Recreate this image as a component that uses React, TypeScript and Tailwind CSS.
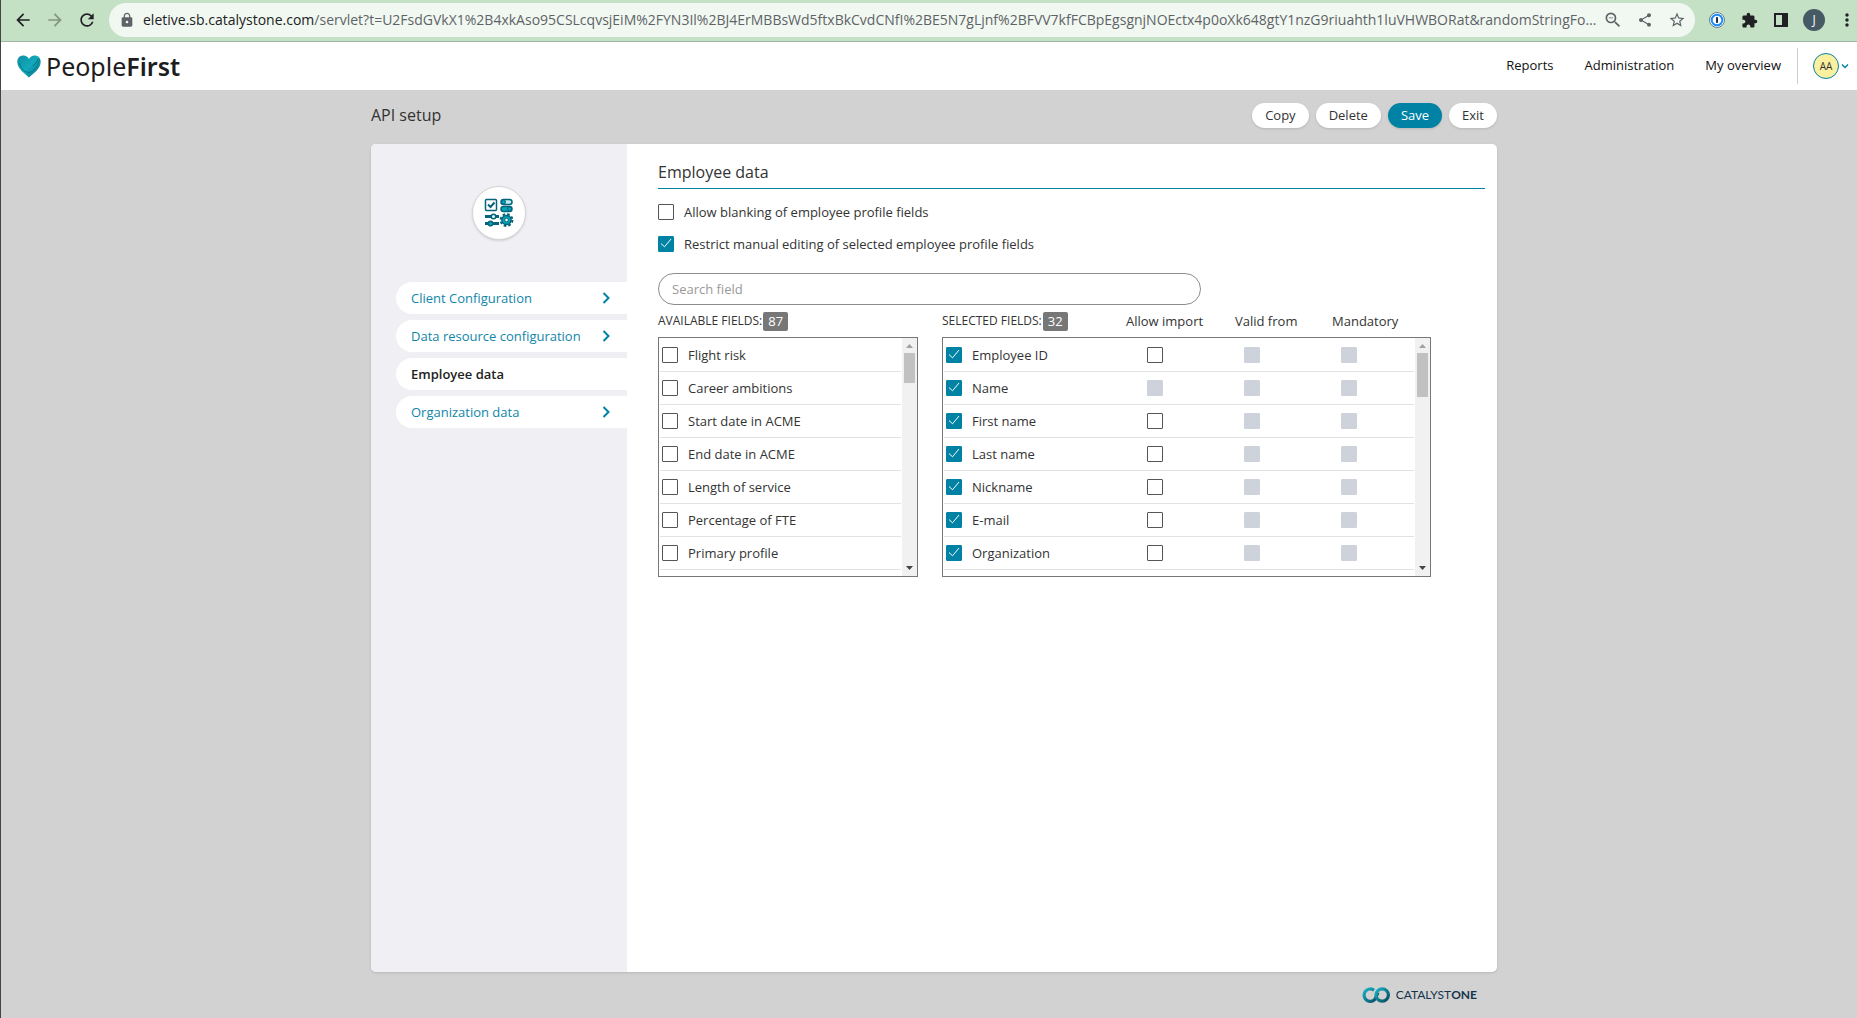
import { useState } from 'react';
import type { ReactNode } from 'react';
import {
  MdArrowBack,
  MdArrowForward,
  MdExtension,
  MdLock,
  MdMoreVert,
  MdOutlineZoomOut,
  MdRefresh,
  MdShare,
  MdStarBorder,
} from 'react-icons/md';

const HOST = 'eletive.sb.catalystone.com';
const PATH =
  '/servlet?t=U2FsdGVkX1%2B4xkAso95CSLcqvsjEiM%2FYN3Il%2BJ4ErMBBsWd5ftxBkCvdCNfI%2BE5N7gLjnf%2BFVV7kfFCBpEgsgnjNOEctx4p0oXk648gtY1nzG9riuahth1luVHWBORat&randomStringFo…';

const MENU = ['Client Configuration', 'Data resource configuration', 'Employee data', 'Organization data'];

const AVAILABLE = [
  'Flight risk',
  'Career ambitions',
  'Start date in ACME',
  'End date in ACME',
  'Length of service',
  'Percentage of FTE',
  'Primary profile',
];

const SELECTED = [
  { name: 'Employee ID', importable: true },
  { name: 'Name', importable: false },
  { name: 'First name', importable: true },
  { name: 'Last name', importable: true },
  { name: 'Nickname', importable: true },
  { name: 'E-mail', importable: true },
  { name: 'Organization', importable: true },
];

type CheckboxProps = {
  label?: string;
  defaultChecked?: boolean;
  disabled?: boolean;
};

function Checkbox({ label, defaultChecked = false, disabled = false }: CheckboxProps) {
  const [checked, setChecked] = useState(defaultChecked);

  return (
    <span className="grid size-4 shrink-0">
      <input
        type="checkbox"
        aria-label={label}
        checked={checked}
        disabled={disabled}
        onChange={(e) => setChecked(e.target.checked)}
        className="col-start-1 row-start-1 size-4 appearance-none rounded-[1px] border border-[#555] bg-white checked:border-[#0082a5] checked:bg-[#0082a5] disabled:border-[#ced3db] disabled:bg-[#ced3db]"
      />
      {checked && (
        <svg
          className="pointer-events-none col-start-1 row-start-1 size-4"
          viewBox="0 0 16 16"
          fill="none"
          stroke="white"
        >
          <path d="M3 7.5l3.5 3.3L13 3" />
        </svg>
      )}
    </span>
  );
}

function BrowserBar() {
  return (
    <div className="flex h-[42px] items-center border-b border-[#9fb5a3] bg-[#c5e1c5] pb-px text-[#202124]">
      <div className="flex w-[108px] shrink-0 items-center gap-3 pl-3">
        <button aria-label="Back">
          <MdArrowBack className="size-5" />
        </button>
        <button aria-label="Forward" className="text-[#82957f]">
          <MdArrowForward className="size-5" />
        </button>
        <button aria-label="Reload">
          <MdRefresh className="size-5" />
        </button>
      </div>
      <div className="flex h-[34px] min-w-0 flex-1 items-center rounded-full bg-[#f1f8f1] pr-2 pl-2.5 text-[#5f6368]">
        <MdLock className="size-4 shrink-0" />
        <div className="ml-2 min-w-0 flex-1 overflow-hidden text-[14px] whitespace-nowrap">
          <span className="text-[#202124]">{HOST}</span>
          {PATH}
        </div>
        <div className="flex shrink-0 items-center gap-3">
          <button aria-label="Zoom" className="grid w-5 place-items-center">
            <MdOutlineZoomOut className="size-5" />
          </button>
          <button aria-label="Share" className="grid w-5 place-items-center">
            <MdShare className="size-4" />
          </button>
          <button aria-label="Bookmark" className="grid w-5 place-items-center">
            <MdStarBorder className="size-[18px]" />
          </button>
        </div>
      </div>
      <div className="flex shrink-0 items-center gap-3 pl-3">
        <button aria-label="Password manager" className="grid w-5 place-items-center">
          <svg className="size-4" viewBox="0 0 16 16">
            <circle cx="8" cy="8" r="7.5" fill="#fff" stroke="#6b7b86" />
            <circle cx="8" cy="8" r="5.3" fill="#fff" stroke="#1a8cff" strokeWidth="2" />
            <rect x="7" y="5" width="2" height="6" rx=".8" fill="#1b2b4b" />
          </svg>
        </button>
        <button aria-label="Extensions" className="grid w-5 place-items-center">
          <MdExtension className="size-[17px]" />
        </button>
        <button aria-label="Side panel" className="grid w-5 place-items-center">
          <svg className="size-4" viewBox="0 0 16 16">
            <path fillRule="evenodd" d="M1 1h14v14H1zM3 3v10h6V3z" fill="currentColor" />
          </svg>
        </button>
        <button className="size-[22px] rounded-full bg-[#455a64] text-[12px] text-white">J</button>
        <button aria-label="Menu" className="grid w-5 place-items-center">
          <MdMoreVert className="size-5" />
        </button>
      </div>
    </div>
  );
}

function HeartLogo() {
  return (
    <svg className="h-[23px] w-6" viewBox="0 0 24 23">
      <defs>
        <linearGradient id="heart" x1="0" y1="0" x2="1" y2="1">
          <stop offset="0" stopColor="#0b8fa0" />
          <stop offset=".5" stopColor="#12a9bb" />
          <stop offset="1" stopColor="#046d80" />
        </linearGradient>
      </defs>
      <path
        d="M12 22.5C9 19.5 0 14 .3 6.5 .5 2.5 3.3.5 6.3.5c2.5 0 4.7 1.4 5.7 3.5 1-2.1 3.2-3.5 5.7-3.5 3 0 5.8 2 6 6C24 14 15 19.5 12 22.5z"
        fill="url(#heart)"
      />
      <path d="M2.5 8c1 6 5 9 9.5 9.5C17.5 17 21 11 22.5 4" fill="none" stroke="#067a8c" />
      <path d="M16 11c2-2 4-4 5-7" fill="none" stroke="#056c7d" />
    </svg>
  );
}

function Header() {
  return (
    <header className="flex h-12 items-center bg-white pr-2 pl-4">
      <a href="#" className="flex items-center gap-[5px] font-['Noto_Sans',sans-serif] text-[25px] text-[#1d1d1d]">
        <HeartLogo />
        <span>
          People<b className="font-semibold">First</b>
        </span>
      </a>
      <nav className="ml-auto flex items-center gap-[31px] pb-0.5 text-[#111]">
        <a href="#">Reports</a>
        <a href="#">Administration</a>
        <a href="#">My overview</a>
      </nav>
      <button className="ml-4 flex h-9 items-center gap-0.5 border-l border-[#ccc] pl-[15px]">
        <span className="grid size-[26px] place-items-center rounded-full border border-[#0082a5] bg-[#faf0a0] text-[10px]">
          AA
        </span>
        <svg className="size-2" viewBox="0 0 8 8" fill="none" stroke="#0082a5" strokeWidth="1.5">
          <path d="M1 2.5l3 3 3-3" />
        </svg>
      </button>
    </header>
  );
}

function SetupIcon() {
  return (
    <svg className="size-[30px]" viewBox="0 0 30 30" fill="none" stroke="#05647a" strokeWidth="1.5">
      <rect x="1.5" y="1.5" width="11" height="11" rx="1" />
      <path d="M4 6.5L6.5 9l4-4.5" strokeWidth="2" />
      <rect x="17" y="1.5" width="11" height="5" rx="2.5" fill="#bdeef3" />
      <circle cx="19.5" cy="4" r="2" fill="#00a5b8" strokeWidth="1" />
      <rect x="17" y="8.5" width="11" height="5" rx="2.5" fill="#00a5b8" />
      <circle cx="25.5" cy="11" r="2" fill="#00a5b8" strokeWidth="1" />
      <path d="M1 18.5h14M1 25.5h14" strokeWidth="3" />
      <circle cx="9.5" cy="18.5" r="2.3" fill="#d9f5f8" />
      <circle cx="6.5" cy="25.5" r="2.3" fill="#00a5b8" />
      <circle cx="22.5" cy="22" r="5.9" strokeWidth="2" strokeDasharray="2.6 2.03" />
      <circle cx="22.5" cy="22" r="4.6" fill="#00a5b8" />
      <circle cx="22.5" cy="22" r="1.8" fill="#fff" strokeWidth="1" />
    </svg>
  );
}

function Sidebar() {
  return (
    <aside className="w-64 shrink-0 bg-[#efeff4] pt-[42px] pl-[25px]">
      <div className="mr-[25px] flex justify-center">
        <div className="grid size-[54px] place-items-center rounded-full border border-[#d5d5d5] bg-white shadow-sm">
          <SetupIcon />
        </div>
      </div>
      <nav className="mt-[42px] flex flex-col gap-1.5">
        {MENU.map((item) =>
          item === 'Employee data' ? (
            <a
              key={item}
              href="#"
              aria-current="page"
              className="flex h-8 items-center rounded-l-full bg-white pl-[15px] font-semibold text-[#222]"
            >
              {item}
            </a>
          ) : (
            <a
              key={item}
              href="#"
              className="flex h-8 items-center justify-between rounded-l-full bg-white pr-[17px] pl-[15px] text-[#0f86a8]"
            >
              {item}
              <svg className="h-3 w-2" viewBox="0 0 8 12" fill="none" stroke="#0082a5" strokeWidth="2">
                <path d="M1.5 1l5 5-5 5" />
              </svg>
            </a>
          ),
        )}
      </nav>
    </aside>
  );
}

function Count({ children }: { children: ReactNode }) {
  return <span className="rounded-[2px] bg-[#777] px-[5px] leading-[19px] text-white">{children}</span>;
}

function Scrollbar({ thumb }: { thumb: string }) {
  return (
    <div className="flex w-[15px] shrink-0 flex-col items-center bg-[#f1f1f1]">
      <svg className="size-[15px]" viewBox="0 0 15 15">
        <path d="M4 10l3.5-4 3.5 4z" fill="#a0a0a0" />
      </svg>
      <div className={`w-[11px] bg-[#c1c1c1] ${thumb}`} />
      <svg className="mt-auto size-[15px]" viewBox="0 0 15 15">
        <path d="M4 5l3.5 4L11 5z" fill="#444" />
      </svg>
    </div>
  );
}

function AvailableFields() {
  return (
    <section className="w-[260px]">
      <h2 className="flex h-8 items-center gap-px">
        <span className="text-[12px]">AVAILABLE FIELDS:</span>
        <Count>87</Count>
      </h2>
      <div className="flex h-60 border border-[#777] bg-white">
        <ul className="mx-px min-w-0 flex-1 pt-px">
          {AVAILABLE.map((name) => (
            <li key={name} className="border-b border-[#e2e2e2]">
              <label className="flex h-8 items-center gap-2.5 pl-0.5">
                <Checkbox />
                {name}
              </label>
            </li>
          ))}
        </ul>
        <Scrollbar thumb="h-[30px]" />
      </div>
    </section>
  );
}

function SelectedFields() {
  return (
    <section className="w-[489px]">
      <div className="flex h-8 items-center">
        <h2 className="flex w-[184px] items-center gap-px">
          <span className="text-[12px]">SELECTED FIELDS:</span>
          <Count>32</Count>
        </h2>
        <span className="w-[109px]">Allow import</span>
        <span className="w-[97px]">Valid from</span>
        <span>Mandatory</span>
      </div>
      <div className="flex h-60 border border-[#777] bg-white">
        <div className="mx-px min-w-0 flex-1 pt-px">
          <table className="w-full table-fixed border-separate border-spacing-0 [&_td]:h-[33px] [&_td]:border-b [&_td]:border-[#e2e2e2]">
            <colgroup>
              <col className="w-[203px]" />
              <col className="w-[97px]" />
              <col className="w-[97px]" />
              <col />
            </colgroup>
            <tbody>
              {SELECTED.map(({ name, importable }) => (
                <tr key={name}>
                  <td className="pl-0.5">
                    <label className="flex items-center gap-2.5">
                      <Checkbox defaultChecked />
                      {name}
                    </label>
                  </td>
                  <td>
                    <Checkbox label={`${name}: allow import`} disabled={!importable} />
                  </td>
                  <td>
                    <Checkbox label={`${name}: valid from`} disabled />
                  </td>
                  <td>
                    <Checkbox label={`${name}: mandatory`} disabled />
                  </td>
                </tr>
              ))}
            </tbody>
          </table>
        </div>
        <Scrollbar thumb="h-11" />
      </div>
    </section>
  );
}

function Footer() {
  return (
    <footer className="flex items-center justify-end gap-1.5 pt-[13px] pr-5">
      <svg className="h-4 w-7" viewBox="0 0 28 16" fill="none" strokeWidth="3.2">
        <defs>
          <linearGradient id="loop" x1="0" y1="0" x2="1" y2="1">
            <stop offset="0" stopColor="#17b3c6" />
            <stop offset="1" stopColor="#07495f" />
          </linearGradient>
        </defs>
        <path d="M12 3.2A6.2 6.2 0 1 0 13 12.2L16 5.5" stroke="url(#loop)" />
        <circle cx="20.2" cy="8" r="6.2" stroke="url(#loop)" />
      </svg>
      <span className="font-['Lato',sans-serif] text-[12px] text-[#14344a]">
        CATALYST<b>ONE</b>
      </span>
    </footer>
  );
}

export default function App() {
  const action = 'h-[25px] rounded-full px-[13px] shadow-sm';

  return (
    <div className="flex min-h-screen flex-col border-l border-[#444] bg-[#d2d2d2] font-['Open_Sans','Noto_Sans',sans-serif] text-[13px] leading-5 text-[#333]">
      <BrowserBar />
      <Header />
      <main className="mx-auto flex w-full max-w-[1136px] flex-1 flex-col pb-[13px] pl-2.5">
        <div className="flex h-[54px] items-center justify-between pb-1">
          <h1 className="text-[16px]">API setup</h1>
          <div className="flex gap-[7px]">
            <button className={`${action} bg-white`}>Copy</button>
            <button className={`${action} bg-white`}>Delete</button>
            <button className={`${action} bg-[#0082a5] text-white`}>Save</button>
            <button className={`${action} bg-white`}>Exit</button>
          </div>
        </div>
        <div className="flex flex-1 overflow-hidden rounded-[5px] bg-white shadow">
          <Sidebar />
          <div className="min-w-0 flex-1 pr-3 pl-[31px]">
            <h2 className="border-b border-[#0082a5] pt-[18px] pb-1.5 text-[16px]">Employee data</h2>
            <div className="mt-[13px] flex flex-col gap-3">
              <label className="flex items-center gap-2.5">
                <Checkbox />
                Allow blanking of employee profile fields
              </label>
              <label className="flex items-center gap-2.5">
                <Checkbox defaultChecked />
                Restrict manual editing of selected employee profile fields
              </label>
            </div>
            <input
              type="text"
              aria-label="Search field"
              placeholder="Search field"
              className="mt-[19px] h-8 w-[543px] rounded-full border border-[#8c8c8c] bg-white px-[13px] placeholder:text-[#999]"
            />
            <div className="flex gap-6">
              <AvailableFields />
              <SelectedFields />
            </div>
          </div>
        </div>
        <Footer />
      </main>
    </div>
  );
}
